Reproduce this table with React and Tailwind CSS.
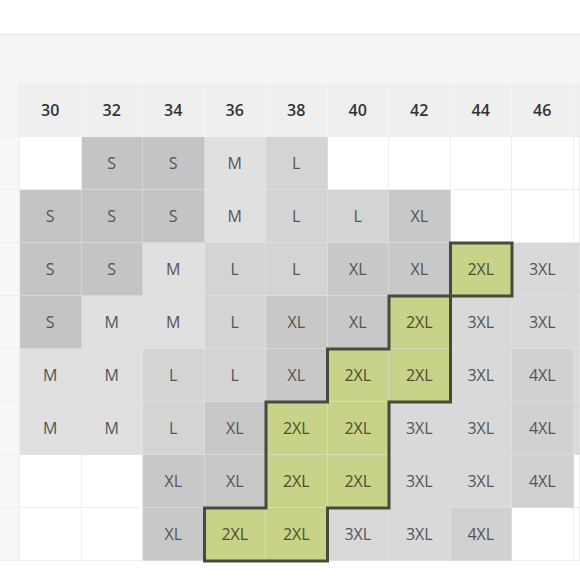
import React from "react";

const tone = {
  w: "bg-white",
  d: "bg-[#c4c4c4] text-[#555]",
  x: "bg-[#c8c8c8] text-[#555]",
  m: "bg-[#e0e0e0] text-[#555]",
  l: "bg-[#d4d4d4] text-[#555]",
  t: "bg-[#d9d9d9] text-[#555]",
  f: "bg-[#d1d1d1] text-[#555]",
  g: "bg-[#c9d289] text-[#4b5030]",
};

const sizes = [30, 32, 34, 36, 38, 40, 42, 44, 46];

// each row: 9 cells + partial column on the right
const rows = [
  [["", "w"], ["S", "d"], ["S", "d"], ["M", "m"], ["L", "l"], ["", "w"], ["", "w"], ["", "w"], ["", "w"], ["", "w"]],
  [["S", "d"], ["S", "d"], ["S", "d"], ["M", "m"], ["L", "l"], ["L", "l"], ["XL", "x"], ["", "w"], ["", "w"], ["", "w"]],
  [["S", "d"], ["S", "d"], ["M", "m"], ["L", "l"], ["L", "l"], ["XL", "x"], ["XL", "x"], ["2XL", "g"], ["3XL", "t"], ["", "t"]],
  [["S", "d"], ["M", "m"], ["M", "m"], ["L", "l"], ["XL", "x"], ["XL", "x"], ["2XL", "g"], ["3XL", "t"], ["3XL", "t"], ["", "t"]],
  [["M", "m"], ["M", "m"], ["L", "l"], ["L", "l"], ["XL", "x"], ["2XL", "g"], ["2XL", "g"], ["3XL", "t"], ["4XL", "f"], ["", "t"]],
  [["M", "m"], ["M", "m"], ["L", "l"], ["XL", "x"], ["2XL", "g"], ["2XL", "g"], ["3XL", "t"], ["3XL", "t"], ["4XL", "f"], ["", "t"]],
  [["", "w"], ["", "w"], ["XL", "x"], ["XL", "x"], ["2XL", "g"], ["2XL", "g"], ["3XL", "t"], ["3XL", "t"], ["4XL", "f"], ["", "w"]],
  [["", "w"], ["", "w"], ["XL", "x"], ["2XL", "g"], ["2XL", "g"], ["3XL", "t"], ["3XL", "t"], ["4XL", "f"], ["", "w"], ["", "w"]],
];

const X = (i) => 20 + 61.5 * i;
const Y = (r) => 54 + 53 * r;

// outline around the recommended (green) block
const outline = [
  [7, 2], [8, 2], [8, 3], [7, 3], [7, 5], [6, 5], [6, 7], [5, 7], [5, 8],
  [3, 8], [3, 7], [4, 7], [4, 5], [5, 5], [5, 4], [6, 4], [6, 3], [7, 3],
]
  .map(([c, r], i) => `${i ? "L" : "M"}${X(c)} ${Y(r)}`)
  .join(" ") + " Z";

const line = "border-r border-b border-[rgba(226,226,226,0.6)]";

function App() {
  return (
    <div className="w-[580px] h-[580px] overflow-hidden bg-white font-['Open_Sans','Noto_Sans',sans-serif]">
      <div className="h-[34px]" />
      <div className="h-[49px] bg-[#f5f5f5] border-t border-[#ebebeb]" />

      <div className="relative grid grid-cols-[20px_repeat(9,61.5px)_1fr]">
        {/* header */}
        <div className="h-[54px] bg-[#f4f4f4] border-r border-[#ececec]" />
        {sizes.map((s) => (
          <div
            key={s}
            className="h-[54px] bg-[#efefef] border-r border-[#f5f5f5] flex items-center justify-center text-[16px] font-semibold text-[#333]">
            {s}
          </div>
        ))}
        <div className="h-[54px] bg-[#efefef]" />

        {rows.map((row, r) => (
          <React.Fragment key={r}>
            <div className="h-[53px] bg-[#f7f7f7] border-r border-b border-[#efefef]" />
            {row.map(([label, t], c) => (
              <div
                key={c}
                className={`h-[53px] flex items-center justify-center text-[16px] ${line} ${tone[t]}`}>
                {label}
              </div>
            ))}
          </React.Fragment>
        ))}

        <svg
          className="absolute left-0 top-0 pointer-events-none"
          width="580"
          height="480"
          viewBox="0 0 580 480">
          <path d={outline} fill="none" stroke="#484b3c" strokeWidth="3" strokeLinejoin="miter" />
        </svg>
      </div>
    </div>
  );
}

export default App;
